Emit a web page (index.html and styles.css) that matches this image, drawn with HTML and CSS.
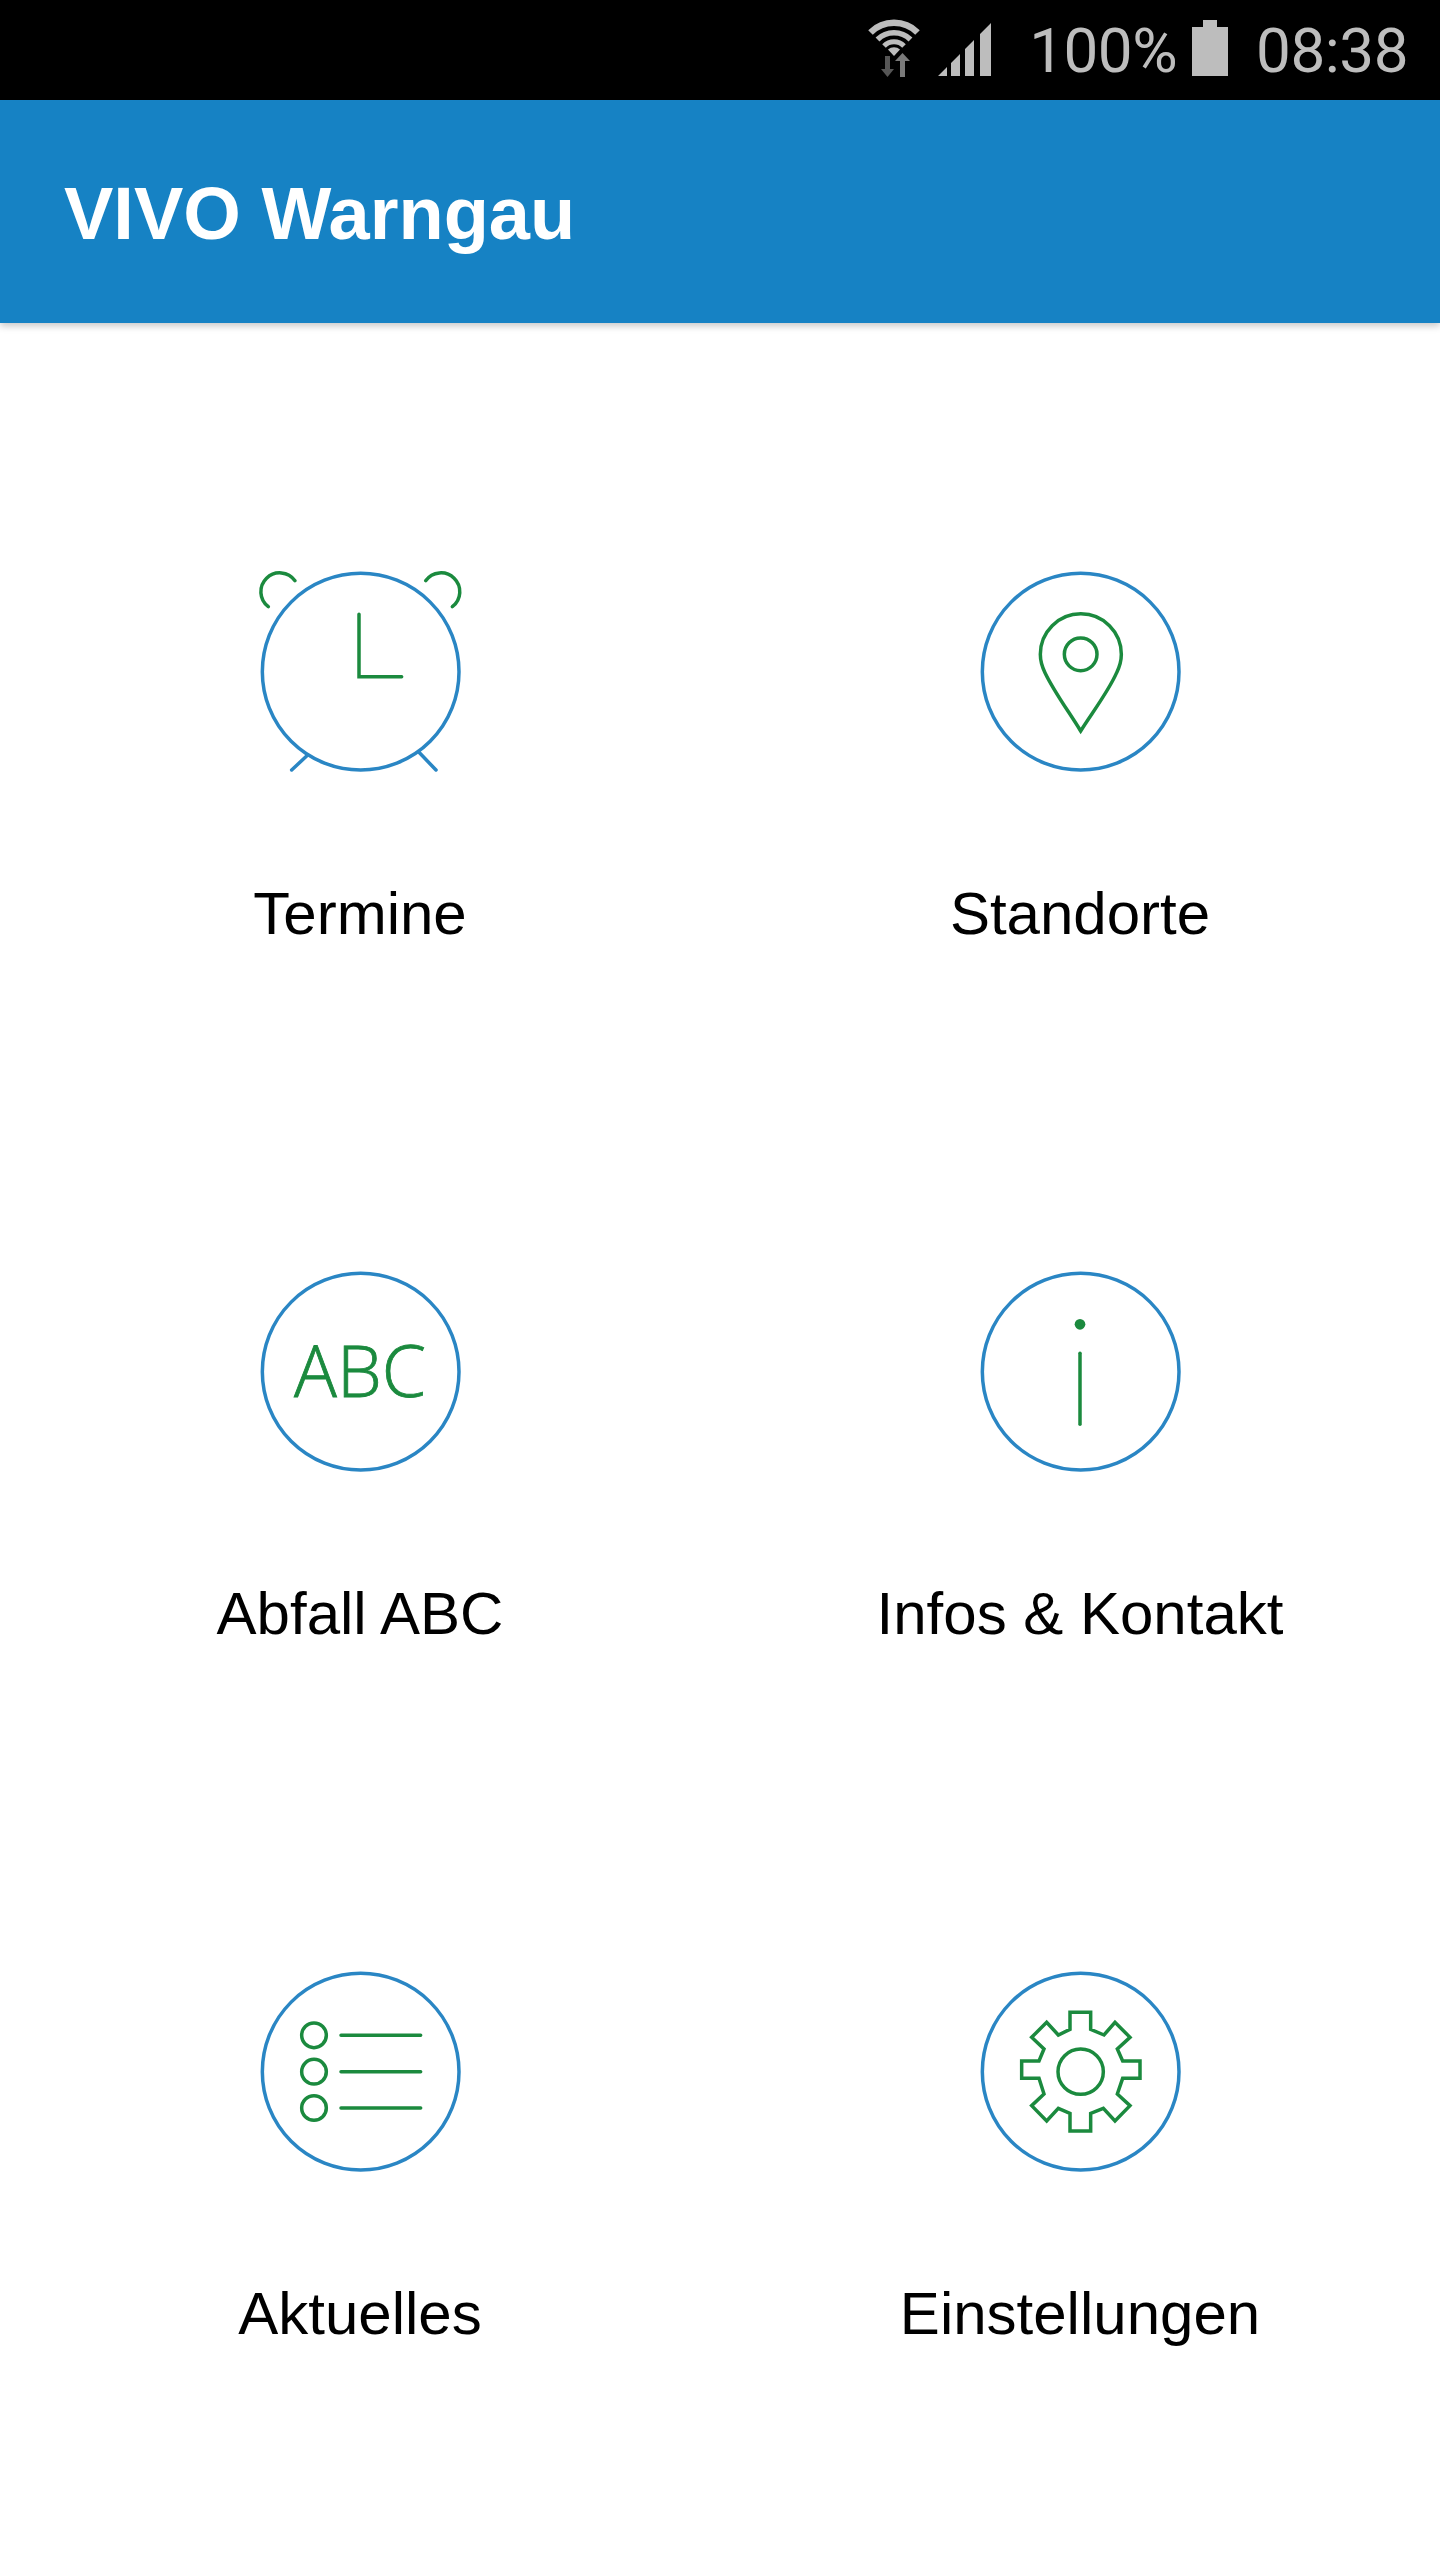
FILE: index.html
```html
<!DOCTYPE html>
<html lang="de">
<head>
<meta charset="utf-8">
<title>VIVO Warngau</title>
<link rel="stylesheet" href="styles.css">
</head>
<body>
<div class="status">
  <svg class="st-wifi" width="54" height="58" viewBox="0 0 54 58">
    <g fill="none" stroke="#bdbdbd">
      <path stroke-width="6.5" d="M3.5 13.5A33.5 33.5 0 0 1 50.5 13.5"/>
      <path stroke-width="5.5" d="M10.5 20.5A23.5 23.5 0 0 1 43.5 20.5"/>
      <path stroke-width="5" d="M17 27A14 14 0 0 1 37 27"/>
    </g>
    <path fill="#bdbdbd" d="M21 30.5A9 9 0 0 1 33 30.5L27 37Z"/>
    <path fill="#565656" d="M18 37H23V50H27L20.5 58L14 50H18Z"/>
    <path fill="#7a7a7a" d="M33 58H38V42H43L35.500 34L28 42H33Z"/>
  </svg>
  <svg class="st-signal" width="53" height="53" viewBox="0 0 53 53">
    <path fill="#bdbdbd" d="M0 53L9 44V53ZM13 53V40L22 31V53ZM27 53V26L36 17V53ZM42 53V11L53 0V53Z"/>
  </svg>
  <span class="st-text st-pct">100%</span>
  <svg class="st-batt" width="36" height="56" viewBox="0 0 36 56">
    <path fill="#bdbdbd" d="M11 0H25V7H36V56H0V7H11Z"/>
  </svg>
  <span class="st-text st-time">08:38</span>
</div>
<header class="appbar"><h1 class="title">VIVO Warngau</h1></header>
<main class="grid">
  <a class="tile">
    <svg class="icon" viewBox="0 0 720 720">
      <g class="blue">
        <circle cx="362" cy="365" r="295"/>
        <path d="M200 618L155 660M537 607L588 660"/>
      </g>
      <g class="green">
        <path d="M85 170A56.500 56.500 0 1 1 165 92"/>
        <path d="M637 170A56.500 56.500 0 1 0 557 92"/>
        <path d="M357 193V380H485"/>
      </g>
    </svg>
    <span class="label">Termine</span>
  </a>
  <a class="tile">
    <svg class="icon" viewBox="0 0 720 720">
      <circle class="blue" cx="362" cy="365" r="295"/>
      <g class="green">
        <path d="M362 543C330 490 282 425 255 368C246 350 241 332 241 313A121 121 0 0 1 484 313C484 332 479 350 470 368C445 425 395 490 362 543Z"/>
        <circle cx="362" cy="313" r="49"/>
      </g>
    </svg>
    <span class="label">Standorte</span>
  </a>
  <a class="tile">
    <svg class="icon" viewBox="0 0 720 720">
      <circle class="blue" cx="362" cy="365" r="295"/>
      <text class="abc" x="360" y="440" text-anchor="middle">ABC</text>
    </svg>
    <span class="label">Abfall ABC</span>
  </a>
  <a class="tile">
    <svg class="icon" viewBox="0 0 720 720">
      <circle class="blue" cx="362" cy="365" r="295"/>
      <g class="green">
        <path d="M360 310V523"/>
      </g>
      <circle class="dot" cx="360" cy="223" r="16"/>
    </svg>
    <span class="label">Infos &amp; Kontakt</span>
  </a>
  <a class="tile">
    <svg class="icon" viewBox="0 0 720 720">
      <circle class="blue" cx="362" cy="365" r="295"/>
      <g class="green">
        <circle cx="222" cy="256" r="37"/>
        <circle cx="222" cy="365" r="37"/>
        <circle cx="222" cy="474" r="37"/>
        <path d="M303 256H542M303 365H542M303 474H542"/>
      </g>
    </svg>
    <span class="label">Aktuelles</span>
  </a>
  <a class="tile">
    <svg class="icon" viewBox="0 0 720 720">
      <circle class="blue" cx="362" cy="365" r="295"/>
      <g class="green gear">
        <path d="M330 187H392V238L432 255L465 217L510 262L472 297L488 333H540V385H488L472 432L510 467L465 513L430 475L392 490V543H330V490L295 475L260 513L215 467L252 432L237 385H185V333H237L252 297L215 262L260 217L295 255L330 238Z"/>
        <circle cx="362" cy="365" r="68"/>
      </g>
    </svg>
    <span class="label">Einstellungen</span>
  </a>
</main>
</body>
</html>
```

FILE: styles.css
```css
* { box-sizing: border-box; }
html, body { margin: 0; padding: 0; background: #fff; }
body {
  width: 1440px;
  height: 2560px;
  overflow: hidden;
  display: flex;
  flex-direction: column;
  font-family: "Liberation Sans", Arial, sans-serif;
}
.status {
  height: 100px;
  flex: none;
  background: #000;
  display: flex;
  align-items: flex-start;
  justify-content: flex-end;
  padding-right: 32px;
}
.st-wifi { margin-top: 19px; }
.st-signal { margin: 23px 0 0 17px; }
.st-text {
  font-family: Roboto, sans-serif;
  font-weight: 400;
  font-size: 62px;
  line-height: 102px;
  letter-spacing: -.5px;
  color: #bdbdbd;
}
.st-pct { margin-left: 38px; }
.st-batt { margin: 20px 0 0 14.5px; }
.st-time { margin-left: 28.5px; }
.appbar {
  position: relative;
  height: 223px;
  flex: none;
  background: #1682c4;
  box-shadow: 0 3px 7px rgba(0, 0, 0, .22);
  display: flex;
  align-items: center;
  padding: 5px 0 0 64px;
}
.title {
  margin: 0;
  font-size: 74px;
  font-weight: 700;
  line-height: 84px;
  color: #fff;
}
.grid {
  flex: 1;
  display: grid;
  grid-template-columns: 720px 720px;
  grid-template-rows: 700px 700px auto;
  padding-top: 227px;
}
.tile {
  display: flex;
  flex-direction: column;
  align-items: center;
}
.icon {
  width: 240px;
  height: 240px;
  display: block;
}
.label {
  margin-top: 91px;
  font-size: 60px;
  line-height: 66px;
  color: #000;
}
.blue { fill: none; stroke: #2a86c4; stroke-width: 10.5; stroke-linecap: round; }
.green { fill: none; stroke: #1b8a3e; stroke-width: 10.5; stroke-linecap: round; }
.gear { stroke-linejoin: miter; }
.dot { fill: #1b8a3e; }
.abc {
  font-family: "Open Sans", sans-serif;
  font-weight: 300;
  font-size: 214px;
  fill: #1b8a3e;
  stroke: #1b8a3e;
  stroke-width: 2.5;
}
```
